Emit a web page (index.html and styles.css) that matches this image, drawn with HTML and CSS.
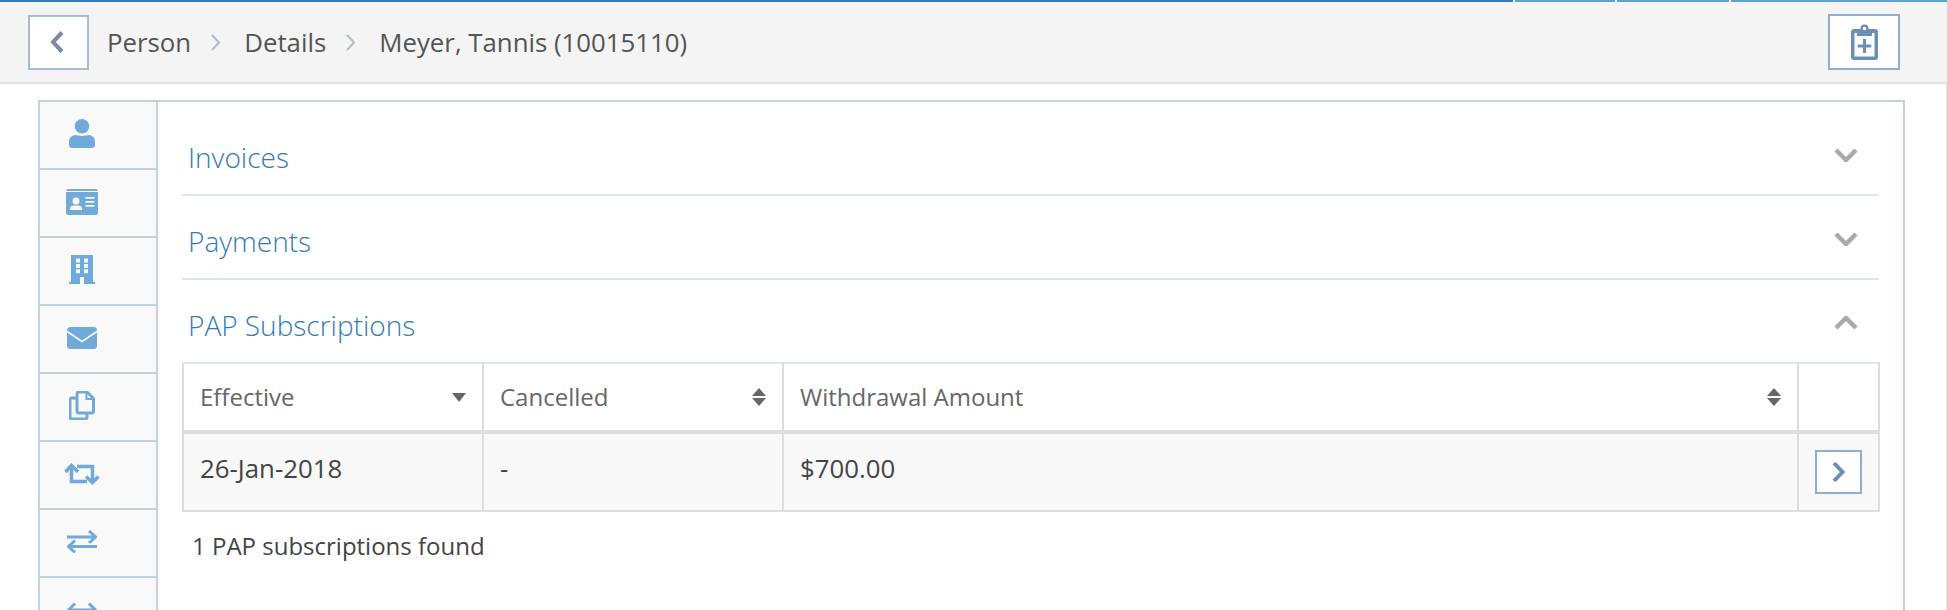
FILE: index.html
```html
<!DOCTYPE html>
<html lang="en">
<head>
<meta charset="utf-8">
<title>Meyer, Tannis (10015110)</title>
<link rel="stylesheet" href="styles.css">
</head>
<body>
<div class="progress">
  <span class="seg seg-a"></span><span class="seg seg-b"></span><span class="seg seg-c"></span><span class="seg seg-d"></span>
</div>
<header class="topbar">
  <button class="back-btn" type="button" aria-label="Back">
    <svg class="ic-back" viewBox="0 0 14 22"><path d="M12 1.500 3 11l9 9.500"/></svg>
  </button>
  <nav class="crumbs">
    <span>Person</span>
    <svg class="crumb-sep" viewBox="0 0 9 17"><path d="M1 1l7 7.500-7 7.500"/></svg>
    <span>Details</span>
    <svg class="crumb-sep" viewBox="0 0 9 17"><path d="M1 1l7 7.500-7 7.500"/></svg>
    <span>Meyer, Tannis (10015110)</span>
  </nav>
  <button class="clip-btn" type="button" aria-label="Add note">
    <svg class="ic-clip" viewBox="0 0 27 36">
      <path fill-rule="evenodd" d="M3 5h6.500V4.500a4 4 0 0 1 8 0V5H24a3 3 0 0 1 3 3v25a3 3 0 0 1-3 3H3a3 3 0 0 1-3-3V8a3 3 0 0 1 3-3zM13.500 2.700a1.800 1.800 0 1 0 0 3.600 1.800 1.800 0 0 0 0-3.600zM3.500 9v23.500h20V9h-2.500v3H6V9z"/>
      <path d="M12 15h3v5.500h5.300v3H15v5.500h-3v-5.500H6.700v-3H12z"/>
    </svg>
  </button>
</header>
<main class="page">
  <div class="frame">
    <aside class="side">
      <a class="side-item"><svg class="ic w26" viewBox="0 0 26 29"><circle cx="13" cy="7.300" r="7.300"/><path d="M0 26v-3c0-4.500 3.500-7 6.500-7 2 0 3.500 1 6.500 1s4.500-1 6.500-1c3 0 6.500 2.500 6.500 7v3c0 2-1.200 3-3 3H3c-1.800 0-3-1-3-3z"/></svg></a>
      <a class="side-item"><svg class="ic w32" viewBox="0 0 32 26"><rect width="32" height="26" rx="2.500"/><rect class="cut" y="2" width="32" height="1"/><circle class="cut" cx="10" cy="12" r="3.500"/><path class="cut" d="M4 21v-1.500c0-2 1.800-3 3.500-3h5c1.700 0 3.500 1 3.500 3V21z"/><rect class="cut" x="19.500" y="8" width="9" height="1.700"/><rect class="cut" x="19.500" y="12" width="9" height="1.700"/><rect class="cut" x="19.500" y="16" width="9" height="1.700"/></svg></a>
      <a class="side-item"><svg class="ic w26" viewBox="0 0 26 29"><path d="M2 0h22v27h2v2H0v-2h2z"/><path class="cut" d="M7 3.500h4v4H7zm8 0h4v4h-4zM7 9h4v4H7zm8 0h4v4h-4zM7 14.300h4v4H7zm8 0h4v4h-4zM11 22h4v7h-4z"/></svg></a>
      <a class="side-item"><svg class="ic w30" viewBox="0 0 30 22"><rect width="30" height="22" rx="3.500"/><path class="cut-line" d="M0 4.500 15 14.500 30 4.500"/></svg></a>
      <a class="side-item"><svg class="ic w26 line" viewBox="0 0 26 29"><path d="M8 7H3a2 2 0 0 0-2 2v17a2 2 0 0 0 2 2h13a2 2 0 0 0 2-2v-3"/><path d="M10 1h8l6.500 6.500V20a2 2 0 0 1-2 2H10a2 2 0 0 1-2-2V3a2 2 0 0 1 2-2z"/><path class="thin" d="M17.500 1v7h7"/></svg></a>
      <a class="side-item"><svg class="ic w36 line bold" viewBox="0 0 36 22"><path d="M1.500 9 7.500 2.500 14 9"/><path d="M7.500 3.500V18.500H23"/><path d="M22 13.500 28.500 19.500 34.500 13.500"/><path d="M28.500 18.500V3.500H13"/></svg></a>
      <a class="side-item"><svg class="ic w30 line" viewBox="0 0 30 23"><path d="M0 7h28M22 1l6.500 6-6.500 6"/><path d="M30 16.500H2M8 10.500l-6.500 6 6.500 6"/></svg></a>
      <a class="side-item"><svg class="ic w30 line" viewBox="0 0 30 18"><path d="M1.500 9h27M8 2.500 1.500 9 8 15.500M22 2.500 28.500 9 22 15.500"/></svg></a>
    </aside>
    <section class="content">
      <div class="acc">
        <h3 class="acc-title">Invoices</h3>
        <svg class="chev" viewBox="0 0 24 14"><path d="M2 2l10 10L22 2"/></svg>
      </div>
      <div class="acc">
        <h3 class="acc-title">Payments</h3>
        <svg class="chev" viewBox="0 0 24 14"><path d="M2 2l10 10L22 2"/></svg>
      </div>
      <div class="acc acc-open">
        <h3 class="acc-title">PAP Subscriptions</h3>
        <svg class="chev" viewBox="0 0 24 14"><path d="M2 12 12 2l10 10"/></svg>
      </div>
      <table class="grid">
        <colgroup><col class="c1"><col class="c2"><col class="c3"><col class="c4"></colgroup>
        <thead>
          <tr>
            <th><div class="th-in"><span>Effective</span><svg class="sort" viewBox="0 0 14 18"><path d="M0 5h14l-7 9z"/></svg></div></th>
            <th><div class="th-in"><span>Cancelled</span><svg class="sort" viewBox="0 0 14 18"><path d="M7 0l7 8H0zM0 10h14l-7 8z"/></svg></div></th>
            <th><div class="th-in"><span>Withdrawal Amount</span><svg class="sort" viewBox="0 0 14 18"><path d="M7 0l7 8H0zM0 10h14l-7 8z"/></svg></div></th>
            <th></th>
          </tr>
        </thead>
        <tbody>
          <tr>
            <td>26-Jan-2018</td>
            <td>-</td>
            <td>$700.00</td>
            <td class="act"><button class="go-btn" type="button" aria-label="Open"><svg class="ic-go" viewBox="0 0 13 22"><path d="M2 2l8.500 9L2 20"/></svg></button></td>
          </tr>
        </tbody>
      </table>
      <p class="found">1 PAP subscriptions found</p>
    </section>
  </div>
</main>
</body>
</html>
```

FILE: styles.css
```css
* { box-sizing: border-box; }
html, body { margin: 0; padding: 0; }
body {
  height: 610px;
  overflow: hidden;
  background: #fff;
  font-family: "Open Sans", "Noto Sans", sans-serif;
  color: #444;
}
.progress { display: flex; gap: 2px; height: 2px; background: #f4f4f4; }
.seg { display: block; height: 2px; }
.seg-a { width: 1513px; background: #337ab7; }
.seg-b { width: 100px; background: #5fa2cc; }
.seg-c { width: 112px; background: #5fa2cc; }
.seg-d { flex: 1; background: #5fa2cc; }

.topbar {
  display: flex;
  align-items: center;
  height: 82px;
  padding: 0 47px 0 28px;
  background: #f4f4f4;
  border-bottom: 2px solid #e3e3e3;
}
.back-btn, .clip-btn, .go-btn {
  display: flex;
  align-items: center;
  justify-content: center;
  padding: 0;
  background: #fff;
  border: 2px solid #8cafd3;
}
.back-btn { width: 61px; height: 55px; padding-right: 4px; border-color: #a9bbcf; }
.clip-btn { width: 72px; height: 56px; margin-left: auto; }
.ic-back { width: 14px; height: 22px; fill: none; stroke: #7c8aa5; stroke-width: 4; }
.ic-clip { width: 27px; height: 36px; fill: #6d8fb5; }
.crumbs {
  display: flex;
  align-items: center;
  margin-left: 18px;
  font-size: 25.800px;
  color: #555;
  gap: 22px;
}
.crumb-sep { width: 9px; height: 17px; margin: 0 2px 0 -2px; fill: none; stroke: #b0bcc6; stroke-width: 2; }

.page { padding: 16px 41px 0 38px; height: 526px; border-right: 1px solid #e3e3e3; }
.frame {
  display: flex;
  height: 600px;
  border: 2px solid #c3d1df;
}
.side { width: 118px; flex: none; background: #f9f9f9; border-right: 2px solid #c3d1df; }
.side-item {
  display: flex;
  align-items: center;
  justify-content: center;
  height: 68px;
  padding: 0 33px 3px 0;
  border-bottom: 2px solid #c3d1df;
}
.ic { display: block; fill: #72a9db; flex: none; }
.ic .cut { fill: #f9f9f9; }
.ic .cut-line { fill: none; stroke: #f9f9f9; stroke-width: 1.800; }
.ic.line { fill: none; stroke: #72a9db; stroke-width: 3; }
.ic.line.bold { stroke-width: 3.600; }
.ic.line .thin { stroke-width: 2; }
.w26 { width: 26px; }
.w30 { width: 30px; }
.w32 { width: 32px; }
.w36 { width: 36px; }

.content { flex: 1; min-width: 0; padding: 10px 24px 0; }
.acc {
  display: flex;
  align-items: center;
  justify-content: space-between;
  height: 84px;
  padding: 4px 21px 0 6px;
  border-bottom: 2px solid #dce7f3;
}
.acc-open { height: 82px; border-bottom: 0; }
.acc-title { margin: 3px 0 0; font-size: 28px; font-weight: 300; color: #337ab7; }
.chev { width: 24px; height: 14px; fill: none; stroke: #aaa9ad; stroke-width: 4.500; }

.grid {
  width: 1696px;
  table-layout: fixed;
  border-collapse: collapse;
}
.c1, .c2 { width: 300px; }
.c3 { width: 1015px; }
.c4 { width: 81px; }
.grid th, .grid td { border: 2px solid #ddd; padding: 0 16px; text-align: left; }
.grid th {
  height: 69px;
  padding-bottom: 1px;
  border-top-color: #dce7f3;
  border-bottom-width: 4px;
  font-size: 24px;
  font-weight: 400;
  color: #666;
}
.grid td { height: 79px; padding-bottom: 8px; background: #f8f8f8; font-size: 25.800px; color: #444; }
.th-in { display: flex; align-items: center; justify-content: space-between; }
.sort { width: 14px; height: 18px; fill: #666; flex: none; }
.grid td.act { padding: 0 0 0 16px; }
.go-btn { width: 47px; height: 44px; }
.ic-go { width: 13px; height: 22px; fill: none; stroke: #6d8fb5; stroke-width: 4; }
.found { margin: 17px 0 0 10px; font-size: 24px; color: #444; }
```
